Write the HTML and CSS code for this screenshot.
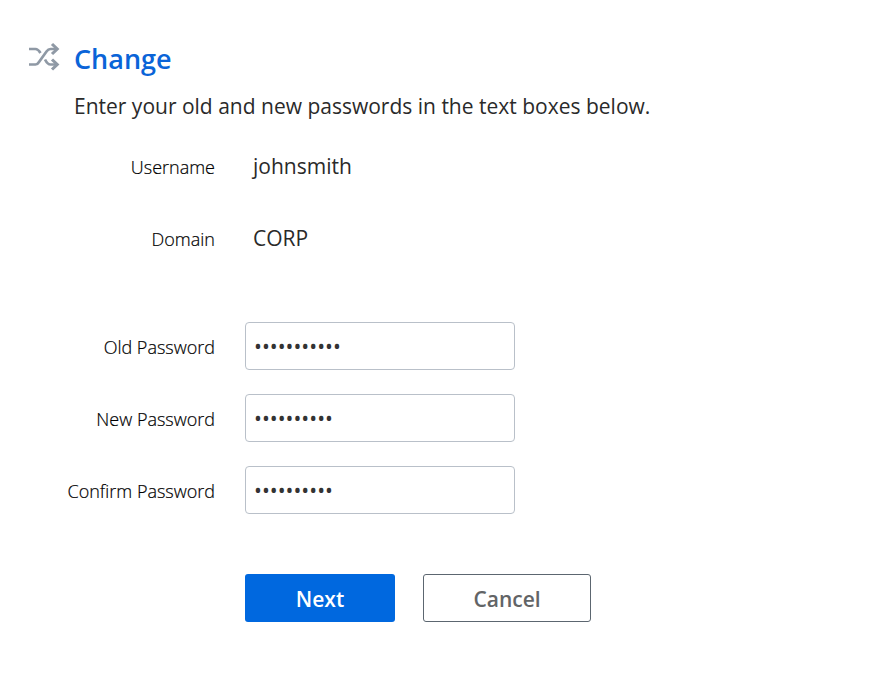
FILE: index.html
```html
<!DOCTYPE html>
<html lang="en">
<head>
<meta charset="utf-8">
<title>Change</title>
<link rel="stylesheet" href="styles.css">
</head>
<body>
<main class="page">
  <header class="heading">
    <svg class="icon" viewBox="0 0 32 30" fill="none" stroke="#8f99a5" stroke-width="2.7">
      <path d="M1 7H7.5Q10 7 12.5 11M1 22.5H7.5Q9.5 22.5 11 20L18.5 9.5Q20.3 7 22.5 7H29M17 17.5Q19.5 22.5 22.5 22.5H29"/>
      <path stroke-width="3.1" d="M24 2L29.2 7L24 12M24 17.5L29.2 22.5L24 27.5"/>
    </svg>
    <h1>Change</h1>
  </header>
  <p class="intro">Enter your old and new passwords in the text boxes below.</p>
  <form class="form">
    <div class="row"><span class="label">Username</span><span class="value">johnsmith</span></div>
    <div class="row"><span class="label">Domain</span><span class="value">CORP</span></div>
    <div class="row first-field"><label class="label" for="old">Old Password</label><input class="field" id="old" type="password" value="aaaaaaaaaaa"></div>
    <div class="row"><label class="label" for="new">New Password</label><input class="field" id="new" type="password" value="aaaaaaaaaa"></div>
    <div class="row"><label class="label" for="confirm">Confirm Password</label><input class="field" id="confirm" type="password" value="aaaaaaaaaa"></div>
    <div class="actions"><button class="btn next" type="button">Next</button><button class="btn cancel" type="button">Cancel</button></div>
  </form>
</main>
</body>
</html>
```
FILE: styles.css
```css
* { box-sizing: border-box; }
body { margin: 0; background: #fff; color: #2a2a2a; font-family: "Open Sans", sans-serif; }
.page { padding: 40px 28px 0; }
.heading { display: flex; height: 38px; }
.icon { width: 32px; height: 30px; margin: 2px 14px 0 0; }
h1 { margin: 0; font-size: 27px; line-height: 37px; font-weight: 600; color: #0a64d8; }
.intro { margin: 13px 0 0 46px; font-size: 21px; line-height: 30px; white-space: nowrap; }
.form { margin-top: 21px; }
.row { display: flex; align-items: center; height: 48px; margin-bottom: 24px; }
.first-field { margin-top: 60px; }
.label { width: 187px; margin-right: 30px; padding-top: 2px; text-align: right; font-size: 18px; font-weight: 300; color: #000; -webkit-text-stroke: .2px #000; }
.value { padding-left: 8px; font-size: 21px; }
.field { width: 270px; height: 48px; padding: 0 8px; border: 1px solid #b9c0c9; border-radius: 4px; font: 21px "Open Sans", sans-serif; color: #333; outline: 0; }
.actions { display: flex; gap: 28px; margin: 60px 0 0 217px; }
.btn { height: 48px; border-radius: 3px; font: 600 21px "Open Sans", sans-serif; padding: 2px 0 0; }
.next { width: 150px; border: 0; background: #0068df; color: #fff; }
.cancel { width: 168px; border: 1px solid #5c6670; background: #fff; color: #626466; }
```
